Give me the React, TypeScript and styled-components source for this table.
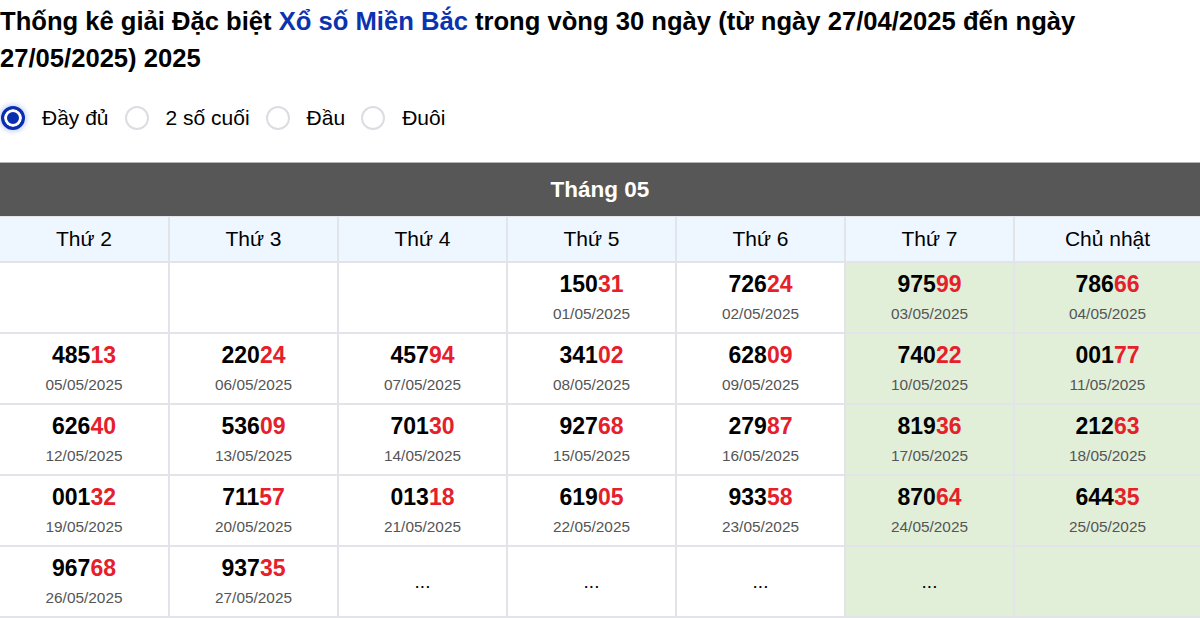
import React, { useState } from "react";
import styled, { createGlobalStyle } from "styled-components";

const GlobalStyle = createGlobalStyle`
  html, body {
    margin: 0;
    padding: 0;
    background: #fff;
    font-family: "Liberation Sans", Arial, sans-serif;
    color: #000;
  }
`;

export const Page = styled.div`
  width: 1200px;
  overflow: hidden;
`;

export const Title = styled.h1`
  margin: 0;
  padding-top: 3px;
  font-size: 25.6px;
  line-height: 37px;
  font-weight: 700;
`;

export const TitleLink = styled.span`
  color: #0b33b0;
`;

export const Filters = styled.div`
  display: flex;
  align-items: center;
  height: 40px;
  margin-top: 21px;
  margin-bottom: 24px;
`;

export const Option = styled.label`
  display: flex;
  align-items: center;
  gap: 17px;
  margin-right: 15px;
  font-size: 21px;
  cursor: pointer;
`;

export const Radio = styled.span<{ $checked: boolean }>`
  width: 24px;
  height: 24px;
  box-sizing: border-box;
  border-radius: 50%;
  margin-left: 1px;
  border: ${(p) => (p.$checked ? "3px solid #0a2fae" : "2px solid #dcdde3")};
  background: ${(p) => (p.$checked ? "#0a2fae" : "#fff")};
  box-shadow: ${(p) =>
    p.$checked ? "inset 0 0 0 3px #fff, 0 0 4px 2px rgba(60, 100, 230, 0.25)" : "none"};
`;

export const MonthBar = styled.div`
  height: 53px;
  display: flex;
  align-items: center;
  justify-content: center;
  background: #575757;
  border-top: 1px solid #b5b5b5;
  color: #fff;
  font-size: 22.5px;
  font-weight: 700;
`;

export const Calendar = styled.div`
  display: grid;
  grid-template-columns: 168px repeat(5, 167px) 1fr;
  grid-template-rows: 44px;
  grid-auto-rows: 69px;
  gap: 2px;
  padding: 1px 0 2px 0;
  background: #e3e4ea;
`;

export const DayHead = styled.div`
  display: flex;
  align-items: center;
  justify-content: center;
  background: #eef6ff;
  font-size: 21px;
`;

export const Cell = styled.div<{ $weekend: boolean }>`
  display: flex;
  flex-direction: column;
  align-items: center;
  justify-content: center;
  gap: 8px;
  padding-bottom: 2px;
  background: ${(p) => (p.$weekend ? "#e1efd9" : "#fff")};
`;

export const Number = styled.div`
  font-size: 23px;
  font-weight: 700;
  line-height: 26px;
`;

export const Tail = styled.span`
  color: #e5202b;
`;

export const DateText = styled.div`
  font-size: 15.4px;
  line-height: 18px;
  color: #555;
`;

export const Pending = styled.div`
  font-size: 19px;
  line-height: 20px;
  margin-top: 3px;
`;

const days = ["Thứ 2", "Thứ 3", "Thứ 4", "Thứ 5", "Thứ 6", "Thứ 7", "Chủ nhật"];

type Result = { value: string; date: string } | "pending" | null;

const results: Result[] = [
  null,
  null,
  null,
  { value: "15031", date: "01/05/2025" },
  { value: "72624", date: "02/05/2025" },
  { value: "97599", date: "03/05/2025" },
  { value: "78666", date: "04/05/2025" },
  { value: "48513", date: "05/05/2025" },
  { value: "22024", date: "06/05/2025" },
  { value: "45794", date: "07/05/2025" },
  { value: "34102", date: "08/05/2025" },
  { value: "62809", date: "09/05/2025" },
  { value: "74022", date: "10/05/2025" },
  { value: "00177", date: "11/05/2025" },
  { value: "62640", date: "12/05/2025" },
  { value: "53609", date: "13/05/2025" },
  { value: "70130", date: "14/05/2025" },
  { value: "92768", date: "15/05/2025" },
  { value: "27987", date: "16/05/2025" },
  { value: "81936", date: "17/05/2025" },
  { value: "21263", date: "18/05/2025" },
  { value: "00132", date: "19/05/2025" },
  { value: "71157", date: "20/05/2025" },
  { value: "01318", date: "21/05/2025" },
  { value: "61905", date: "22/05/2025" },
  { value: "93358", date: "23/05/2025" },
  { value: "87064", date: "24/05/2025" },
  { value: "64435", date: "25/05/2025" },
  { value: "96768", date: "26/05/2025" },
  { value: "93735", date: "27/05/2025" },
  "pending",
  "pending",
  "pending",
  "pending",
  null,
];

const options = ["Đầy đủ", "2 số cuối", "Đầu", "Đuôi"];

export default function App() {
  const [mode, setMode] = useState(0);
  return (
    <Page>
      <GlobalStyle />
      <Title>
        Thống kê giải Đặc biệt <TitleLink>Xổ số Miền Bắc</TitleLink> trong vòng 30 ngày (từ ngày
        27/04/2025 đến ngày 27/05/2025) 2025
      </Title>
      <Filters>
        {options.map((o, i) => (
          <Option key={o} onClick={() => setMode(i)}>
            <Radio $checked={mode === i} />
            {o}
          </Option>
        ))}
      </Filters>
      <MonthBar>Tháng 05</MonthBar>
      <Calendar>
        {days.map((d) => (
          <DayHead key={d}>{d}</DayHead>
        ))}
        {results.map((r, i) => {
          const weekend = i % 7 >= 5;
          return (
            <Cell key={i} $weekend={weekend}>
              {r === "pending" && <Pending>...</Pending>}
              {r && r !== "pending" && (
                <>
                  <Number>
                    {r.value.slice(0, 3)}
                    <Tail>{r.value.slice(3)}</Tail>
                  </Number>
                  <DateText>{r.date}</DateText>
                </>
              )}
            </Cell>
          );
        })}
      </Calendar>
    </Page>
  );
}
